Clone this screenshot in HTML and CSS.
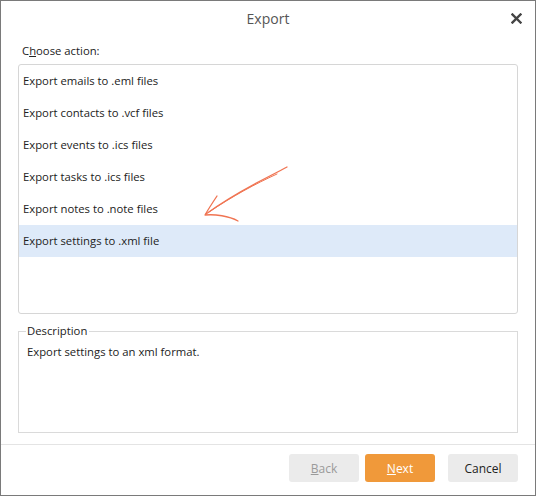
FILE: index.html
```html
<!DOCTYPE html>
<html lang="en">
<head>
<meta charset="utf-8">
<title>Export</title>
<link rel="stylesheet" href="styles.css">
</head>
<body>
<div class="dialog">
  <header class="titlebar">
    <span class="title">Export</span>
    <button class="close" aria-label="Close">
      <svg width="11" height="11" viewBox="0 0 11 11"><path d="M1.5 1.5 L9.5 9.5 M9.5 1.5 L1.5 9.5" stroke="#444" stroke-width="2.4" stroke-linecap="square"/></svg>
    </button>
  </header>

  <main class="content">
    <label class="caption">C<u>h</u>oose action:</label>
    <div class="list-wrap">
      <ul class="list">
        <li class="item">Export emails to .eml files</li>
        <li class="item">Export contacts to .vcf files</li>
        <li class="item">Export events to .ics files</li>
        <li class="item">Export tasks to .ics files</li>
        <li class="item">Export notes to .note files</li>
        <li class="item selected">Export settings to .xml file</li>
      </ul>
      <svg class="arrow" width="100" height="70" viewBox="0 0 100 70">
        <path d="M98 7 C 78 18, 50 30, 17 54" fill="none" stroke="#f07452" stroke-width="1.3" stroke-linecap="round"/>
        <path d="M88 14 C 66 24, 44 36, 20 52" fill="none" stroke="#f07452" stroke-width="1" stroke-linecap="round"/>
        <path d="M28 36 C 24 42, 20 48, 16 55 C 26 54, 40 56, 49 61" fill="none" stroke="#f07452" stroke-width="1.3" stroke-linecap="round" stroke-linejoin="round"/>
      </svg>
    </div>

    <fieldset class="desc">
      <legend class="desc-legend">Description</legend>
      <p class="desc-text">Export settings to an xml format.</p>
    </fieldset>
  </main>

  <footer class="footer">
    <button class="btn" disabled><u>B</u>ack</button>
    <button class="btn primary"><u>N</u>ext</button>
    <button class="btn cancel">Cancel</button>
  </footer>
</div>
</body>
</html>
```

FILE: styles.css
```css
* {
  box-sizing: border-box;
}

html, body {
  margin: 0;
  padding: 0;
  background: #fff;
}

body {
  font-family: "Open Sans", "Noto Sans", sans-serif;
  font-size: 11.3px;
  color: #222;
}

.dialog {
  width: 536px;
  height: 496px;
  border: 1px solid #7a7a7a;
  background: #fff;
  display: flex;
  flex-direction: column;
}

.titlebar {
  position: relative;
  height: 33px;
  display: flex;
  align-items: center;
  justify-content: center;
}

.title {
  font-size: 14px;
  color: #555;
  margin-top: 1px;
}

.close {
  position: absolute;
  right: 12px;
  top: 10px;
  width: 14px;
  height: 14px;
  padding: 0;
  border: 0;
  background: none;
  display: flex;
  align-items: center;
  justify-content: center;
}

.content {
  flex: 1;
  padding: 8px 17px 0;
  display: flex;
  flex-direction: column;
}

.caption {
  display: block;
  height: 22px;
  line-height: 18px;
  padding-left: 4px;
}

.list-wrap {
  position: relative;
  height: 250px;
  border: 1px solid #d6d6d6;
  border-radius: 3px;
}

.list {
  list-style: none;
  margin: 0;
  padding: 0;
}

.item {
  height: 32px;
  line-height: 32px;
  padding-left: 4px;
}

.item.selected {
  background: #deeaf9;
}

.arrow {
  position: absolute;
  left: 170px;
  top: 95px;
}

.desc {
  margin: 10px 0 0;
  height: 109px;
  padding: 6px 8px;
  border: 1px solid #dadada;
}

.desc-legend {
  padding: 0 2px 0 1px;
  margin-left: -1px;
  line-height: 14px;
}

.desc-text {
  margin: 0;
  line-height: 16px;
}

.footer {
  height: 51px;
  border-top: 1px solid #e4e4e4;
  margin-top: 11px;
  display: flex;
  justify-content: flex-end;
  align-items: flex-start;
  padding: 9px 17px 0;
  gap: 6px;
}

.btn {
  width: 70px;
  height: 28px;
  border: 0;
  border-radius: 3px;
  background: #ebebeb;
  font-family: inherit;
  font-size: 12px;
  color: #222;
  padding: 0;
}

.btn[disabled] {
  color: #9a9a9a;
}

.btn.primary {
  background: #f0993a;
  color: #fff;
}

.btn.cancel {
  margin-left: 7px;
}
```
